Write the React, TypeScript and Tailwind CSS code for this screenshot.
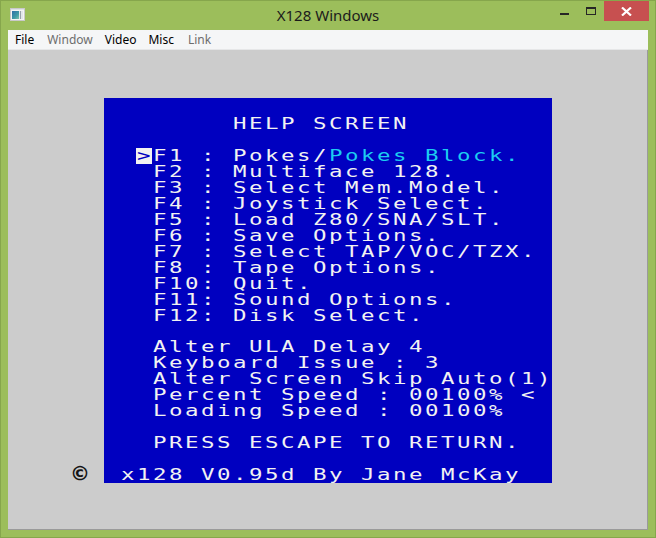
import React from "react";

type Seg = [string, "w" | "c" | "i" | "k"];

const rows: Seg[][] = [
  [],
  [["       HELP SCREEN", "w"]],
  [],
  [[" ", "w"], [">", "i"], ["F1 : Pokes/", "w"], ["Pokes Block.", "c"]],
  [["  F2 : Multiface 128.", "w"]],
  [["  F3 : Select Mem.Model.", "w"]],
  [["  F4 : Joystick Select.", "w"]],
  [["  F5 : Load Z80/SNA/SLT.", "w"]],
  [["  F6 : Save Options.", "w"]],
  [["  F7 : Select TAP/VOC/TZX.", "w"]],
  [["  F8 : Tape Options.", "w"]],
  [["  F10: Quit.", "w"]],
  [["  F11: Sound Options.", "w"]],
  [["  F12: Disk Select.", "w"]],
  [],
  [["  Alter ULA Delay 4", "w"]],
  [["  Keyboard Issue : 3", "w"]],
  [["  Alter Screen Skip Auto(1)", "w"]],
  [["  Percent Speed : 00100% <", "w"]],
  [["  Loading Speed : 00100%", "w"]],
  [],
  [["  PRESS ESCAPE TO RETURN.", "w"]],
  [],
  [["x128 V0.95d By Jane McKay", "w"]],
];

const kindClass: Record<Seg[1], string> = {
  w: "text-[#f2f2f2]",
  c: "text-[#1ccdf0]",
  i: "text-[#0000c0] bg-[#f2f2f2]",
  k: "text-[#1a1a1a]",
};

function Cell({ ch, kind }: { ch: string; kind: Seg[1] }) {
  return (
    <span
      className={
        "flex w-4 h-4 shrink-0 justify-center text-[16px] leading-4 " +
        kindClass[kind]
      }
      style={{ fontFamily: "'DejaVu Sans Mono', 'Liberation Mono', monospace" }}
    >
      <span className="inline-block scale-x-[1.4]">{ch === " " ? "\u00a0" : ch}</span>
    </span>
  );
}

function Row({ segs }: { segs: Seg[] }) {
  const cells: React.ReactNode[] = [];
  let k = 0;
  segs.forEach(([text, kind]) => {
    for (const ch of text) {
      cells.push(<Cell key={k++} ch={ch} kind={kind} />);
    }
  });
  return <div className="flex h-4 whitespace-pre">{cells}</div>;
}

function AppIcon() {
  return (
    <svg width="15" height="13" viewBox="0 0 15 13">
      <defs>
        <linearGradient id="g1" x1="0" y1="0" x2="1" y2="1">
          <stop offset="0" stopColor="#2f6fa8" />
          <stop offset="0.6" stopColor="#3f9aa6" />
          <stop offset="1" stopColor="#7cc3a8" />
        </linearGradient>
      </defs>
      <rect x="0.5" y="0.5" width="14" height="12" fill="#f4f4f4" stroke="#c9c9c9" />
      <rect x="2" y="3" width="7" height="8" fill="url(#g1)" />
      <rect x="9" y="3" width="4" height="8" fill="#e2e6ea" />
      <rect x="10" y="3" width="1" height="8" fill="#9aa3ab" />
      <rect x="1" y="1" width="13" height="1" fill="#dfe3e6" />
    </svg>
  );
}

export default function App() {
  const ui = { fontFamily: "'Segoe UI', 'Noto Sans', 'Open Sans', sans-serif" };
  return (
    <div className="w-[656px] h-[538px] bg-[#9cbe5b] border border-[#86a64c] flex flex-col overflow-hidden">
      {/* title bar */}
      <div className="h-[29px] grid grid-cols-[1fr_auto_1fr] shrink-0">
        <div className="pl-[9px] pt-[7px]">
          <AppIcon />
        </div>
        <div className="text-[15px] leading-[29px] text-[#1b1b1b]" style={ui}>
          X128 Windows
        </div>
        <div className="flex justify-end items-start pr-[6px]">
          <div className="mt-[12px] w-[9px] h-[2px] bg-[#262626] mr-[17px]" />
          <div className="mt-[6px] w-[10px] h-[8px] border border-t-2 border-[#262626] mr-[8px]" />
          <div className="w-[45px] h-[20px] bg-[#c75050] flex items-center justify-center">
            <svg width="11" height="9" viewBox="0 0 11 9">
              <path d="M1 0.5 L10 8.5 M10 0.5 L1 8.5" stroke="#ffffff" strokeWidth="2.2" />
            </svg>
          </div>
        </div>
      </div>

      <div className="mx-[7px] flex flex-col">
        {/* menu bar */}
        <div
          className="h-[20px] bg-[#f5f6f7] border-b border-[#e6e7e8] flex items-center text-[12px] leading-[19px]"
          style={ui}
        >
          <span className="px-[7px] text-[#000000]">File</span>
          <span className="pl-[6px] pr-[5px] text-[#6d6d6d]">Window</span>
          <span className="pl-[7px] pr-[5px] text-[#000000]">Video</span>
          <span className="px-[7px] text-[#000000]">Misc</span>
          <span className="px-[7px] text-[#6d6d6d]">Link</span>
        </div>

        {/* client area */}
        <div className="h-[480px] bg-[#cccccc] border-r border-b border-[#9a9a9a] flex pt-[48px]">
          <div className="w-[96px] pl-[63px] flex items-end h-[386px]">
            <span
              className="mb-[1px] w-[18px] h-[20px] flex justify-center text-[20px] leading-[20px] font-bold text-[#151515]"
              style={{ fontFamily: "'DejaVu Sans', sans-serif" }}
            >
              {"\u00a9"}
            </span>
          </div>
          <div className="w-[448px] h-[385px] bg-[#0000c0] pt-[2px] pl-[16px] flex flex-col overflow-hidden">
            {rows.map((r, i) => (
              <Row key={i} segs={r} />
            ))}
          </div>
        </div>
      </div>
    </div>
  );
}
